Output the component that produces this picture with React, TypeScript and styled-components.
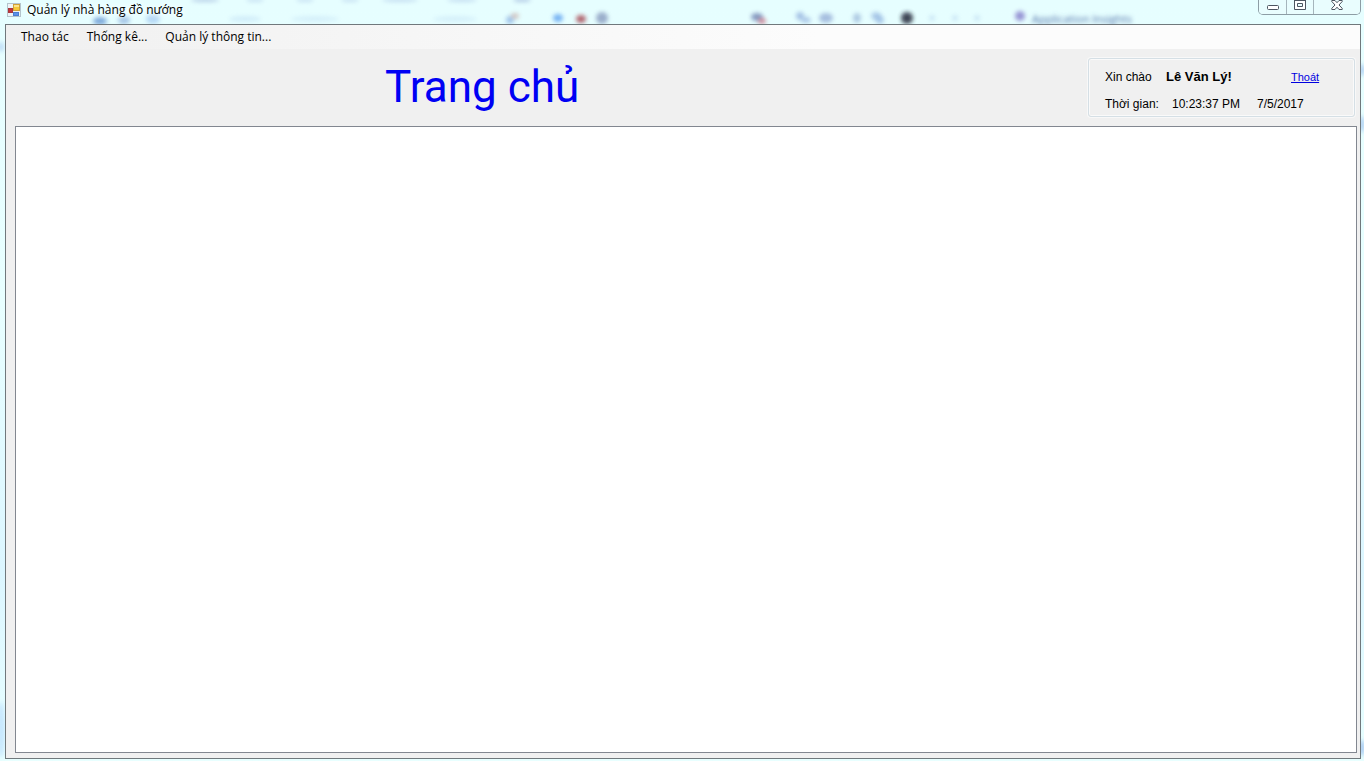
import React from "react";
import styled, { createGlobalStyle } from "styled-components";

const GlobalStyle = createGlobalStyle`
  *, *::before, *::after { box-sizing: border-box; }
  body { margin: 0; background: #e4fdff; }
`;

const uiFont = `"Open Sans", "Noto Sans", sans-serif`;
const formFont = `"Liberation Sans", Roboto, sans-serif`;

const Window = styled.div`
  position: relative;
  display: flex;
  flex-direction: column;
  min-height: 100vh;
  padding: 0 3px 2px 5px;
  background: linear-gradient(#e6feff 0, #e8ffff 40%, #dcf6ff 75%, #e8ffff 100%);
  overflow: hidden;
`;

const Glass = styled.svg`
  position: absolute;
  top: 0;
  left: 0;
  width: 1364px;
  height: 761px;
`;

const TitleBar = styled.header`
  position: relative;
  display: flex;
  align-items: flex-start;
  height: 24px;
  padding-left: 2px;
`;

const Caption = styled.div`
  display: flex;
  align-items: center;
  gap: 6px;
  height: 20px;
  font: 12px/20px ${uiFont};
  color: #000;
  text-shadow: 0 0 6px #fff, 0 0 8px #fff;
  white-space: nowrap;
`;

const WindowButtons = styled.div`
  display: flex;
  height: 15px;
  margin-left: auto;
  border: 1px solid #8d9da5;
  border-top: 0;
  border-radius: 0 0 5px 5px;
  overflow: hidden;
`;

const WindowButton = styled.button<{ $wide?: boolean }>`
  display: flex;
  align-items: flex-start;
  justify-content: center;
  width: ${(p) => (p.$wide ? 47 : 27)}px;
  height: 14px;
  padding: 0;
  border: 0;
  background: #e9fdfe;

  & + & {
    border-left: 1px solid #a5b5bc;
  }
`;

const Client = styled.div`
  position: relative;
  display: flex;
  flex: 1;
  flex-direction: column;
  border: 1px solid #70787c;
  background: #f0f0f0;
`;

const MenuBar = styled.nav`
  display: flex;
  align-items: center;
  gap: 2px;
  height: 24px;
  padding-left: 7px;
  background: linear-gradient(90deg, #f0f0f0, #fcfcfc 60%);
`;

const MenuItem = styled.button`
  padding: 0 8px;
  border: 0;
  background: none;
  font: 12px/20px ${uiFont};
  color: #000;
  white-space: nowrap;
`;

const Banner = styled.div`
  display: flex;
  align-items: flex-start;
  justify-content: space-between;
  padding: 9px 5px 9px 28%;
`;

const PageTitle = styled.h1`
  margin: 0;
  font: 400 44px/58px Roboto, "Liberation Sans", sans-serif;
  color: #0000f4;
  white-space: nowrap;
`;

const UserPanel = styled.section`
  display: flex;
  flex-direction: column;
  gap: 7px;
  width: 267px;
  height: 59px;
  padding: 8px 16px;
  border: 1px solid #d5dfe5;
  border-radius: 3px;
  box-shadow: inset 0 0 0 1px #fafafa, 0 0 0 1px #f8f8f8;
  font: 12px/20px ${formFont};
  color: #000;
  white-space: nowrap;
`;

const PanelRow = styled.div`
  display: flex;
`;

const Label = styled.span<{ $width: number }>`
  width: ${(p) => p.$width}px;
`;

const UserName = styled.strong`
  width: 125px;
  font-size: 13px;
`;

const LogoutLink = styled.a`
  font-size: 11px;
  color: #0000e0;
`;

const Workspace = styled.main`
  flex: 1;
  margin: 0 3px 5px 9px;
  border: 1px solid #828790;
  background: #fff;
`;

const AppIcon = () => (
  <svg width="14" height="14" viewBox="0 0 14 14" aria-hidden="true">
    <rect x="0.5" y="0.5" width="13" height="13" fill="#eef4f8" stroke="#b4c4cc" />
    <rect x="6.5" y="1.5" width="6" height="6" fill="#f5c938" stroke="#d0a238" />
    <rect x="7" y="2" width="5" height="2" fill="#fbe48c" />
    <rect x="1.5" y="5.5" width="4" height="4" fill="#c8323a" stroke="#a8383c" />
    <rect x="6.5" y="9.5" width="5" height="3" fill="#5b92e8" stroke="#4c7cd0" />
  </svg>
);

const MinimizeGlyph = () => (
  <svg width="14" height="14" viewBox="0 0 14 14" aria-hidden="true">
    <rect x="1.5" y="5.5" width="11" height="4" rx="1" fill="#fff" stroke="#4c5560" />
  </svg>
);

const RestoreGlyph = () => (
  <svg width="12" height="14" viewBox="0 0 12 14" aria-hidden="true">
    <path d="M0.5 0V9.5H11.5V0M3.5 3.5H8.5V6.5H3.5Z" fill="#fff" stroke="#4c5560" />
    <path d="M0 .5H12" stroke="#4c5560" />
  </svg>
);

const CloseGlyph = () => (
  <svg width="12" height="14" viewBox="0 0 12 14" aria-hidden="true">
    <path
      d="M.8 .5H4L6 2.7 8 .5H11.2V1.5L8 5 11.2 8.3V9.5H8L6 7.2 4 9.5H.8V8.3L4 5 .8 1.5Z"
      fill="#fff"
      stroke="#4c5560"
    />
  </svg>
);

type Smudge = [x: number, y: number, rx: number, ry: number, color: string, opacity: number];

const smudges: Smudge[] = [
  [100, 21, 7, 4, "#4a7fc8", 0.65],
  [124, 20, 6, 4, "#5b88cc", 0.5],
  [153, 19, 7, 5, "#86b4ec", 0.5],
  [205, 0, 14, 2, "#7890c8", 0.4],
  [255, 0, 9, 2, "#88a4d8", 0.3],
  [305, 0, 9, 2, "#88a4d8", 0.3],
  [350, 0, 9, 2, "#88a4d8", 0.3],
  [400, 0, 18, 2, "#88a4d8", 0.35],
  [462, 0, 15, 2, "#88a4d8", 0.35],
  [522, 0, 9, 2, "#7890c8", 0.45],
  [245, 19, 16, 3, "#a4c8ec", 0.3],
  [315, 19, 24, 3, "#a4c8ec", 0.25],
  [455, 19, 22, 3, "#a4c8ec", 0.25],
  [510, 20, 4, 4, "#6090d8", 0.5],
  [515, 16, 4, 3, "#c09088", 0.5],
  [558, 18, 5, 4, "#5a9ff0", 0.8],
  [581, 19, 5, 4, "#a84a54", 0.85],
  [602, 18, 6, 6, "#6878a8", 0.6],
  [757, 17, 6, 4, "#5266a0", 0.65],
  [762, 21, 4, 3, "#c84860", 0.6],
  [800, 16, 4, 4, "#6688cc", 0.5],
  [806, 20, 5, 3, "#6688cc", 0.45],
  [826, 18, 7, 5, "#6880c0", 0.5],
  [857, 18, 4, 5, "#7898c8", 0.5],
  [876, 16, 5, 4, "#6890d0", 0.45],
  [880, 20, 4, 4, "#6890d0", 0.45],
  [907, 18, 6, 6, "#202838", 0.85],
  [932, 18, 3, 3, "#90b4e0", 0.3],
  [955, 18, 3, 3, "#90b4e0", 0.3],
  [977, 18, 3, 3, "#90b4e0", 0.3],
  [1020, 16, 5, 5, "#7060c0", 0.65],
  [1318, 0, 10, 3, "#6888c8", 0.4],
  [1, 47, 3, 5, "#80a8e8", 0.4],
  [1, 730, 4, 28, "#a8d0fc", 0.5],
  [1362, 70, 3, 6, "#80a8e8", 0.5],
  [1362, 124, 3, 8, "#80a8e8", 0.5],
  [1362, 748, 3, 8, "#80a8e8", 0.6],
];

const WindowGlass = () => (
  <Glass viewBox="0 0 1364 761" aria-hidden="true">
    <defs>
      <filter id="frost" x="-100%" y="-100%" width="300%" height="300%">
        <feGaussianBlur stdDeviation="2" />
      </filter>
    </defs>
    {smudges.map(([x, y, rx, ry, color, opacity]) => (
      <ellipse
        key={`${x}-${y}`}
        cx={x}
        cy={y}
        rx={rx}
        ry={ry}
        fill={color}
        opacity={opacity}
        filter="url(#frost)"
      />
    ))}
    <text
      x="1032"
      y="23"
      fontFamily="Open Sans, sans-serif"
      fontSize="11"
      fill="#5070a8"
      filter="url(#frost)"
    >
      Application Insights
    </text>
  </Glass>
);

export default function App() {
  return (
    <>
      <GlobalStyle />
      <Window>
        <WindowGlass />
        <TitleBar>
          <Caption>
            <AppIcon />
            <span>Quản lý nhà hàng đồ nướng</span>
          </Caption>
          <WindowButtons>
            <WindowButton aria-label="Minimize">
              <MinimizeGlyph />
            </WindowButton>
            <WindowButton aria-label="Restore">
              <RestoreGlyph />
            </WindowButton>
            <WindowButton $wide aria-label="Close">
              <CloseGlyph />
            </WindowButton>
          </WindowButtons>
        </TitleBar>
        <Client>
          <MenuBar>
            <MenuItem>Thao tác</MenuItem>
            <MenuItem>Thống kê...</MenuItem>
            <MenuItem>Quản lý thông tin...</MenuItem>
          </MenuBar>
          <Banner>
            <PageTitle>Trang chủ</PageTitle>
            <UserPanel>
              <PanelRow>
                <Label $width={61}>Xin chào</Label>
                <UserName>Lê Văn Lý!</UserName>
                <LogoutLink href="#">Thoát</LogoutLink>
              </PanelRow>
              <PanelRow>
                <Label $width={67}>Thời gian:</Label>
                <Label $width={85}>10:23:37 PM</Label>
                <span>7/5/2017</span>
              </PanelRow>
            </UserPanel>
          </Banner>
          <Workspace />
        </Client>
      </Window>
    </>
  );
}
